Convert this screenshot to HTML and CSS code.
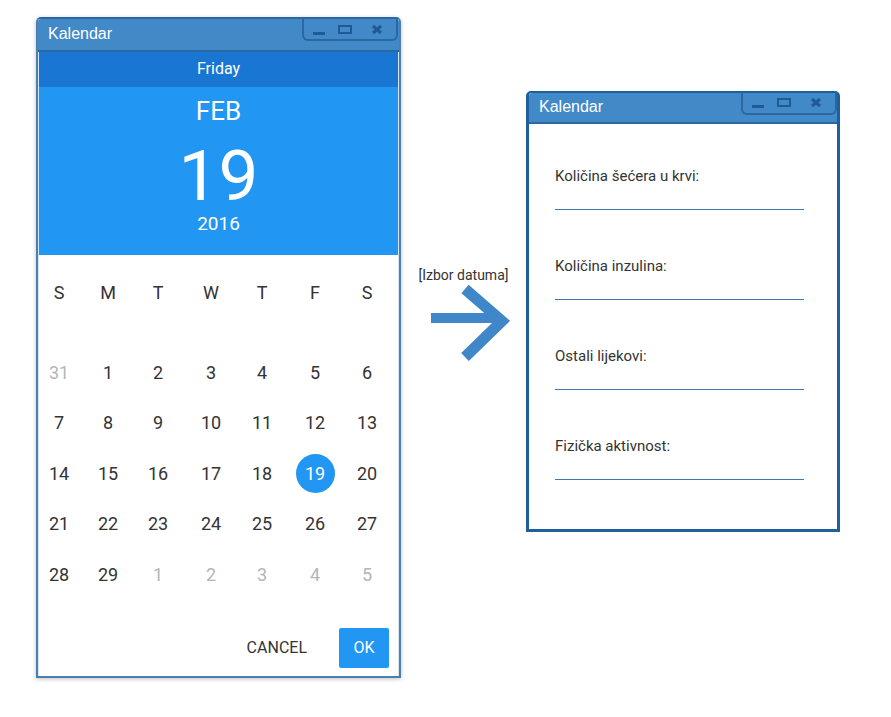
FILE: index.html
```html
<!DOCTYPE html>
<html>
<head>
<meta charset="utf-8">
<link rel="stylesheet" href="styles.css">
</head>
<body>
<div class="canvas">
  <div class="window win-left">
    <div class="titlebar">
      <span class="title">Kalendar</span>
      <div class="controls">
        <svg width="94" height="22" viewBox="0 0 94 22">
          <rect x="9" y="14" width="12" height="3" fill="#1f5a94"/>
          <rect x="35" y="8" width="12" height="7" fill="none" stroke="#1f5a94" stroke-width="2"/>
          <path d="M69 8 L77 15 M77 8 L69 15" stroke="#1f5a94" stroke-width="3"/>
        </svg>
      </div>
    </div>
    <div class="picker">
      <div class="dayname">Friday</div>
      <div class="datehead">
        <div class="month">FEB</div>
        <div class="bigday">19</div>
        <div class="year">2016</div>
      </div>
      <div class="cal">
        <div class="grid dow">
          <span>S</span><span>M</span><span>T</span><span>W</span><span>T</span><span>F</span><span>S</span>
        </div>
        <div class="grid days">
          <span class="muted">31</span><span>1</span><span>2</span><span>3</span><span>4</span><span>5</span><span>6</span>
          <span>7</span><span>8</span><span>9</span><span>10</span><span>11</span><span>12</span><span>13</span>
          <span>14</span><span>15</span><span>16</span><span>17</span><span>18</span><span class="sel"><i>19</i></span><span>20</span>
          <span>21</span><span>22</span><span>23</span><span>24</span><span>25</span><span>26</span><span>27</span>
          <span>28</span><span>29</span><span class="muted">1</span><span class="muted">2</span><span class="muted">3</span><span class="muted">4</span><span class="muted">5</span>
        </div>
        <div class="actions">
          <span class="cancel">CANCEL</span>
          <span class="ok">OK</span>
        </div>
      </div>
    </div>
  </div>

  <div class="connector">
    <div class="label">[Izbor datuma]</div>
    <svg class="arrow" width="125" height="80" viewBox="0 0 125 80">
      <path d="M30 34 H98" stroke="#3f87c9" stroke-width="10"/>
      <path d="M64 5 L101 37 L64 73" fill="none" stroke="#3f87c9" stroke-width="11"/>
    </svg>
  </div>

  <div class="window win-right">
    <div class="titlebar">
      <span class="title">Kalendar</span>
      <div class="controls">
        <svg width="94" height="22" viewBox="0 0 94 22">
          <rect x="9" y="13" width="12" height="3" fill="#1f5a94"/>
          <rect x="35" y="7" width="12" height="7" fill="none" stroke="#1f5a94" stroke-width="2"/>
          <path d="M69 7 L77 14 M77 7 L69 14" stroke="#1f5a94" stroke-width="3"/>
        </svg>
      </div>
    </div>
    <div class="form">
      <div class="field"><div class="flabel">Količina šećera u krvi:</div><div class="fline"></div></div>
      <div class="field"><div class="flabel">Količina inzulina:</div><div class="fline"></div></div>
      <div class="field"><div class="flabel">Ostali lijekovi:</div><div class="fline"></div></div>
      <div class="field"><div class="flabel">Fizička aktivnost:</div><div class="fline"></div></div>
    </div>
  </div>
</div>
</body>
</html>
```

FILE: styles.css
```css
html, body { margin: 0; padding: 0; background: #fff; }
body { width: 891px; height: 717px; overflow: hidden; }

.canvas {
  display: flex;
  align-items: flex-start;
  padding: 17px 0 0 36px;
}

.window {
  box-sizing: border-box;
  background: #fff;
  border-radius: 5px 5px 0 0;
}

.win-left {
  width: 365px;
  height: 661px;
  border: 2px solid #4b7fb4;
  border-top-color: #2a67a3;
  box-shadow: 0 1px 4px rgba(0,0,0,0.25);
  display: flex;
  flex-direction: column;
}

.win-right {
  width: 314px;
  height: 441px;
  margin-top: 74px;
  border: 3px solid #1e5f9c;
  border-top-width: 2px;
}

.titlebar {
  background: #4289c8;
  border-bottom: 2px solid #2a67a3;
  border-radius: 3px 3px 0 0;
  display: flex;
  align-items: flex-start;
  justify-content: space-between;
  flex: none;
}
.win-left .titlebar { height: 31px; }
.win-right .titlebar { height: 29px; }

.title {
  font-family: "Liberation Sans", Arial, sans-serif;
  font-size: 16px;
  color: #fff;
  padding-left: 10px;
  line-height: 30px;
}
.win-right .title { line-height: 28px; }

.controls {
  box-sizing: border-box;
  width: 96px;
  height: 23px;
  border: 2px solid #2a67a3;
  border-top: none;
  border-radius: 0 0 6px 6px;
  margin-right: 1px;
  margin-top: -1px;
}
.controls svg { display: block; }
.win-right .controls { margin-right: 0; }

/* picker */
.picker {
  flex: 1;
  display: flex;
  flex-direction: column;
  font-family: Roboto, "Noto Sans", sans-serif;
  border-left: 1px solid #d8e4ef;
  border-right: 1px solid #d8e4ef;
}
.dayname {
  background: #1976d2;
  color: #fff;
  height: 35px;
  line-height: 34px;
  text-align: center;
  font-size: 16px;
}
.datehead {
  background: #2196f3;
  color: #fff;
  height: 168px;
  box-sizing: border-box;
  padding-top: 9px;
  text-align: center;
}
.month { font-size: 26px; line-height: 30px; }
.bigday { font-size: 71px; line-height: 66px; margin-top: 17px; }
.year { font-size: 19px; line-height: 22px; margin-top: 4px; }

.cal { flex: 1; display: flex; flex-direction: column; }

.grid {
  display: grid;
  grid-template-columns: 40px 58px 42px 64px 38px 68px 36px;
  color: #333;
  font-size: 18px;
}
.grid span { display: flex; align-items: center; justify-content: center; }
.dow { margin-top: 12px; height: 50px; }
.days { margin-top: 30px; grid-auto-rows: 50.5px; }
.muted { color: #b5b5b5; }
.sel i {
  font-style: normal;
  flex: none;
  width: 39px;
  height: 39px;
  border-radius: 50%;
  background: #2196f3;
  color: #fff;
  display: flex;
  align-items: center;
  justify-content: center;
}

.actions {
  margin-top: 28px;
  display: flex;
  justify-content: flex-end;
  align-items: center;
  gap: 32px;
  padding-right: 9px;
  font-size: 16px;
}
.cancel { color: #333; }
.ok {
  background: #2196f3;
  color: #fff;
  width: 50px;
  height: 40px;
  border-radius: 2px;
  display: flex;
  align-items: center;
  justify-content: center;
}

/* connector */
.connector {
  width: 125px;
  margin-top: 249px;
  display: flex;
  flex-direction: column;
  align-items: center;
}
.label {
  font-family: Roboto, "Noto Sans", sans-serif;
  font-size: 14px;
  color: #333;
  line-height: 18px;
}
.arrow { display: block; margin-top: 0; }

/* form */
.form {
  padding: 43px 35px 0 26px;
  font-family: Roboto, "Noto Sans", sans-serif;
}
.field { height: 90px; }
.flabel { font-size: 15px; color: #333; line-height: 18px; }
.fline { margin-top: 24px; height: 1px; background: #3b78b6; width: 249px; }
```
